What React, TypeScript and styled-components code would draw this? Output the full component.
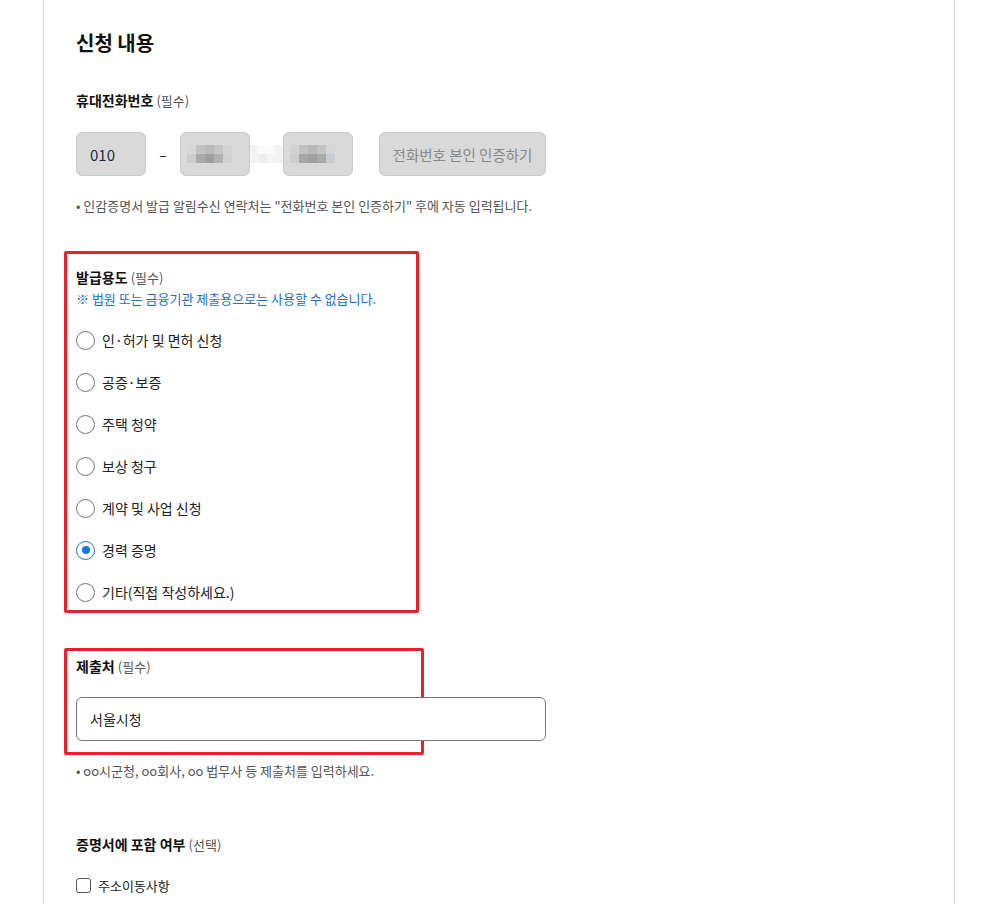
import styled, { createGlobalStyle } from 'styled-components';

const GlobalStyle = createGlobalStyle`
  html, body {
    margin: 0;
    padding: 0;
    background: #ffffff;
    font-family: "Noto Sans CJK KR", "Noto Sans", sans-serif;
    color: #111;
  }
`;

const purposes = [
  '인·허가 및 면허 신청',
  '공증·보증',
  '주택 청약',
  '보상 청구',
  '계약 및 사업 신청',
  '경력 증명',
  '기타(직접 작성하세요.)',
];

// 블러 처리된 번호 칸 (모자이크)
const mosaicA = ['#d6d6d6', '#c3c3c3', '#bbbbbb', '#c6c6c6', '#d3d3d3', '#cccccc', '#a9a9a9', '#9f9f9f', '#b2b2b2', '#cfd1d3'];
const mosaicB = ['#d3d3d3', '#c2c2c2', '#b9b9b9', '#c4c4c4', '#d5d6d8', '#cdcdcd', '#a6a6a6', '#a0a0a0', '#aaaaaa', '#c8cbcf'];
const mosaicGap = ['#f3f3f3', '#fbfbfb', '#fbfbfb', '#f3f3f3', '#f3f3f3', '#eeeeee', '#f4f4f4', '#f3f3f3'];

const App = () => {
  const selected = '경력 증명';
  return (
    <>
      <GlobalStyle />
      <Page>
        <Card>
          <Title>신청 내용</Title>

          <FieldLabel>
            휴대전화번호 <Hint>(필수)</Hint>
          </FieldLabel>
          <PhoneRow>
            <PhoneBox>010</PhoneBox>
            <Dash>–</Dash>
            <PhoneBox>
              <Mosaic $cols={5}>
                {mosaicA.map((c, i) => (
                  <Cell key={i} style={{ background: c }} />
                ))}
              </Mosaic>
            </PhoneBox>
            <GapMosaic>
              {mosaicGap.map((c, i) => (
                <Cell key={i} style={{ background: c }} />
              ))}
            </GapMosaic>
            <PhoneBox>
              <Mosaic $cols={5}>
                {mosaicB.map((c, i) => (
                  <Cell key={i} style={{ background: c }} />
                ))}
              </Mosaic>
            </PhoneBox>
            <VerifyButton type="button">전화번호 본인 인증하기</VerifyButton>
          </PhoneRow>
          <Note $top={21}>• 인감증명서 발급 알림수신 연락처는 "전화번호 본인 인증하기" 후에 자동 입력됩니다.</Note>

          <Highlight $width={355} $top={36} $padTop={13} $padBottom={8}>
            <FieldLabel $top={0}>
              발급용도 <Hint>(필수)</Hint>
            </FieldLabel>
            <Notice>※ 법원 또는 금융기관 제출용으로는 사용할 수 없습니다.</Notice>
            <RadioList>
              {purposes.map((p) => (
                <RadioRow key={p}>
                  <RadioMark $checked={p === selected} />
                  <span>{p}</span>
                </RadioRow>
              ))}
            </RadioList>
          </Highlight>

          <Highlight $width={360} $top={35} $padTop={5} $padBottom={11}>
            <FieldLabel $top={0}>
              제출처 <Hint>(필수)</Hint>
            </FieldLabel>
            <TextInput>서울시청</TextInput>
          </Highlight>
          <Note $top={7}>• oo시군청, oo회사, oo 법무사 등 제출처를 입력하세요.</Note>

          <FieldLabel $top={54}>
            증명서에 포함 여부 <Hint>(선택)</Hint>
          </FieldLabel>
          <CheckRow>
            <CheckMark />
            <span>주소이동사항</span>
          </CheckRow>
        </Card>
      </Page>
    </>
  );
};

export default App;

const Page = styled.div`
  padding-left: 43px;
  width: 994px;
  height: 904px;
  overflow: hidden;
  box-sizing: border-box;
`;

const Card = styled.div`
  margin-top: -12px;
  width: 912px;
  min-height: 1000px;
  border: 1px solid #d4d4d4;
  border-radius: 12px;
  padding: 40px 32px 0 32px;
  box-sizing: border-box;
`;

const Title = styled.h2`
  margin: 0;
  font-size: 20px;
  line-height: 28px;
  font-weight: 700;
  color: #111;
`;

const FieldLabel = styled.div<{ $top?: number }>`
  margin-top: ${({ $top }) => ($top ?? 33)}px;
  height: 20px;
  font-size: 14px;
  line-height: 20px;
  font-weight: 700;
  color: #111;
`;

const Hint = styled.span`
  font-size: 13px;
  line-height: 1;
  font-weight: 400;
  color: #555;
`;

const PhoneRow = styled.div`
  margin-top: 22px;
  display: flex;
  align-items: center;
  height: 44px;
`;

const PhoneBox = styled.div`
  width: 70px;
  height: 44px;
  box-sizing: border-box;
  background: #d9d9d9;
  border: 1px solid #cbcbcb;
  border-radius: 6px;
  display: flex;
  align-items: center;
  padding-left: 13px;
  font-size: 15px;
  color: #1f2a44;
`;

const Dash = styled.span`
  width: 34px;
  text-align: center;
  font-size: 14px;
  color: #222;
`;

const Mosaic = styled.div<{ $cols: number }>`
  display: grid;
  grid-template-columns: repeat(${({ $cols }) => $cols}, 9px);
  grid-auto-rows: 9px;
  margin-left: -7px;
`;

const GapMosaic = styled.div`
  width: 33px;
  display: grid;
  grid-template-columns: repeat(4, 1fr);
  grid-auto-rows: 9px;
`;

const Cell = styled.span`
  display: block;
`;

const VerifyButton = styled.button`
  margin-left: 26px;
  width: 167px;
  height: 44px;
  background: #d9d9d9;
  border: 1px solid #cbcbcb;
  border-radius: 6px;
  font-family: inherit;
  font-size: 14.5px;
  color: #888;
  padding: 0;
`;

const Note = styled.p<{ $top: number }>`
  margin: ${({ $top }) => $top}px 0 0;
  font-size: 13px;
  line-height: 18px;
  color: #555;
`;

const Highlight = styled.div<{ $width: number; $top: number; $padTop: number; $padBottom: number }>`
  margin: ${({ $top }) => $top}px 0 0 -12px;
  width: ${({ $width }) => $width}px;
  box-sizing: border-box;
  border: 3px solid #e8212f;
  border-radius: 2px;
  padding: ${({ $padTop, $padBottom }) => `${$padTop}px 9px ${$padBottom}px`};
`;

const Notice = styled.p`
  margin: 2px 0 0;
  font-size: 13px;
  line-height: 20px;
  color: #1a6fd1;
`;

const RadioList = styled.div`
  margin-top: 21px;
  display: flex;
  flex-direction: column;
  gap: 22px;
`;

const RadioRow = styled.label`
  display: flex;
  align-items: center;
  gap: 7px;
  height: 20px;
  font-size: 14px;
  color: #222;
`;

const RadioMark = styled.span<{ $checked: boolean }>`
  width: 19px;
  height: 19px;
  box-sizing: border-box;
  border-radius: 50%;
  border: 1px solid ${({ $checked }) => ($checked ? '#1a73e8' : '#767676')};
  flex: none;
  display: flex;
  align-items: center;
  justify-content: center;
  &::after {
    content: '';
    width: 8px;
    height: 8px;
    border-radius: 50%;
    background: ${({ $checked }) => ($checked ? '#1a73e8' : 'transparent')};
  }
`;

const TextInput = styled.div`
  margin-top: 21px;
  width: 470px;
  height: 44px;
  box-sizing: border-box;
  border: 1px solid #767676;
  border-radius: 6px;
  display: flex;
  align-items: center;
  padding-left: 13px;
  font-size: 14px;
  color: #222;
  background: #fff;
`;

const CheckRow = styled.label`
  margin-top: 21px;
  display: flex;
  align-items: center;
  gap: 7px;
  height: 20px;
  font-size: 13px;
  color: #222;
`;

const CheckMark = styled.span`
  width: 15px;
  height: 15px;
  box-sizing: border-box;
  border: 1px solid #555;
  border-radius: 3px;
  flex: none;
`;
